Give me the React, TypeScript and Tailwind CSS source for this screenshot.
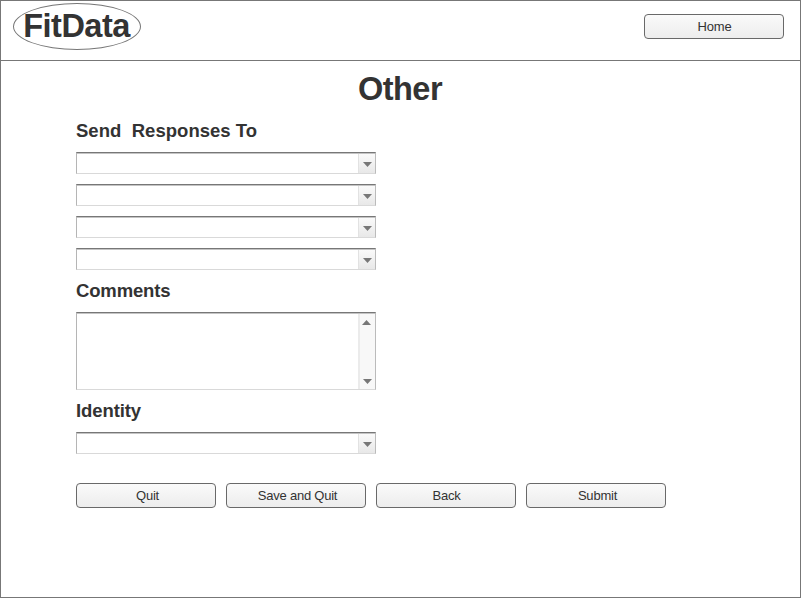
import React from "react";

function Button({ label, className = "pl-[3px]" }: { label: string; className?: string }) {
  return (
    <button
      type="button"
      className={`h-[25px] w-[140px] rounded-[4px] border border-[#696969] bg-linear-to-b from-[#fafafa] to-[#ededed] text-center text-[13px] leading-[23px] tracking-[-0.22px] text-[#333333] ${className}`}
    >
      {label}
    </button>
  );
}

function Arrow({ up = false }: { up?: boolean }) {
  return (
    <svg width="9" height="5" viewBox="0 0 9 5" className="block">
      <path d={up ? "M0 5L4.5 0L9 5Z" : "M0 0H9L4.5 5Z"} fill="#777777" />
    </svg>
  );
}

const fieldBorder =
  "flex w-[300px] justify-end border border-t-[#777777] border-r-[#bbbbbb] border-b-[#d9d9d9] border-l-[#b5b5b5] shadow-[inset_0_1px_0_#c4c4c4]";

function Combo() {
  return (
    <div className={`${fieldBorder} h-[22px]`}>
      <div className="mt-px flex w-[17px] justify-center border-l border-[#e2e2e2] bg-linear-to-b from-[#fafafa] to-[#e8e8e8] pt-[8px] pl-px">
        <Arrow />
      </div>
    </div>
  );
}

function Heading({ children, className }: { children: React.ReactNode; className: string }) {
  return <h2 className={`h-[22px] text-[18.5px] leading-[21px] font-bold whitespace-pre ${className}`}>{children}</h2>;
}

export default function App() {
  return (
    <div className="h-[598px] w-[801px] overflow-hidden border border-[#777777] bg-white font-['Liberation_Sans',Arial,sans-serif] text-[#333333]">
      <header className="flex h-[60px] items-start justify-between border-b border-[#777777] pr-4 pl-3">
        <div className="mt-[2px] flex h-[47px] w-[128px] items-start justify-center rounded-[50%] border border-[#777777]">
          <span className="pr-px text-[32.5px] leading-[45px] font-bold tracking-[-0.5px]">FitData</span>
        </div>
        <div className="mt-[13px] flex">
          <Button label="Home" className="pl-[1px]" />
        </div>
      </header>
      <h1 className="mt-[10px] h-[36px] pr-px text-center text-[32.5px] leading-[37px] font-bold tracking-[-0.5px]">Other</h1>
      <main className="flex flex-col pl-[75px]">
        <Heading className="mt-[13px] tracking-[0.03px]">{"Send  Responses To"}</Heading>
        <div className="mt-[10px] flex flex-col gap-[10px]">
          <Combo />
          <Combo />
          <Combo />
          <Combo />
        </div>
        <Heading className="mt-[10px] tracking-[-0.15px]">Comments</Heading>
        <div className={`${fieldBorder} mt-[10px] h-[78px]`}>
          <div className="mt-px flex w-[17px] flex-col items-start justify-between border-l-2 border-[#ebebeb] bg-[#f8f8f8] pt-[6px] pb-[5px] pl-[2px]">
            <Arrow up />
            <div className="pl-px">
              <Arrow />
            </div>
          </div>
        </div>
        <Heading className="mt-[10px] tracking-[-0.1px]">Identity</Heading>
        <div className="mt-[10px]">
          <Combo />
        </div>
        <div className="mt-[29px] flex gap-[10px]">
          <Button label="Quit" />
          <Button label="Save and Quit" />
          <Button label="Back" className="pl-[1px]" />
          <Button label="Submit" />
        </div>
      </main>
    </div>
  );
}
